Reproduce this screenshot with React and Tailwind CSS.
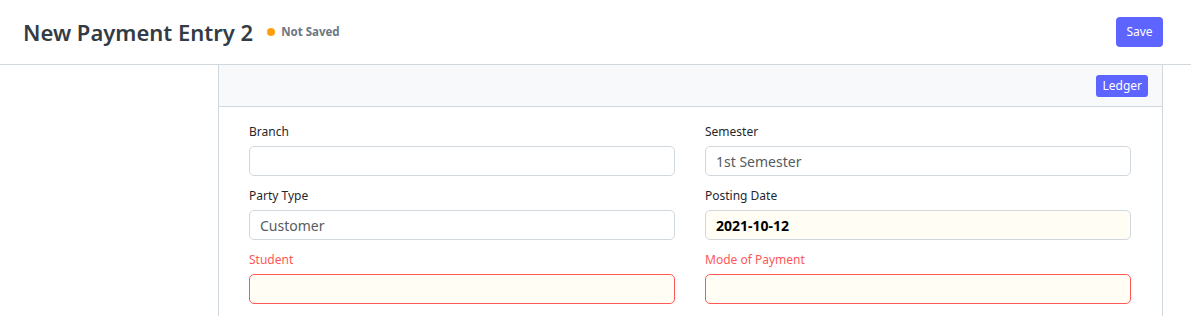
import React from "react";

const Field = ({ label, value, bold, required, highlight }) => (
  <div className="flex flex-col">
    <label
      className={`mb-[5px] h-[18px] text-[12px] leading-[18px] ${
        required ? "text-[#ff5858]" : "text-[#1f272e]"
      }`}
    >
      {label}
    </label>
    <div
      className={`flex h-[30px] items-center rounded-[5px] border px-[10px] text-[14px] ${
        required
          ? "border-[#ff5858] bg-[#fffdf4]"
          : highlight
          ? "border-[#d1d8dd] bg-[#fffdf4]"
          : "border-[#d1d8dd] bg-white"
      } ${bold ? "font-bold text-black" : "text-[#555b61]"}`}
    >
      {value}
    </div>
  </div>
);

export default function App() {
  return (
    <div
      className="h-[316px] overflow-hidden bg-white"
      style={{ fontFamily: '"Noto Sans", Roboto, sans-serif' }}
    >
      {/* Page head */}
      <div className="flex h-[65px] items-center justify-between border-b border-[#d1d8dd] pl-[23px] pr-[28px]">
        <div className="flex items-center">
          <h1 className="text-[22px] font-semibold leading-none text-[#333c44]">
            New Payment Entry 2
          </h1>
          <span className="ml-[14px] flex items-center gap-[6px] text-[11.5px] font-bold text-[#6c7680]">
            <span className="h-[8px] w-[8px] rounded-full bg-[#ffa00a]" />
            Not Saved
          </span>
        </div>
        <button className="h-[30px] w-[47px] rounded-[4px] bg-[#5e64ff] text-[12px] text-white">
          Save
        </button>
      </div>

      {/* Body */}
      <div className="flex">
        <div className="w-[218px] shrink-0" />
        <div className="w-[945px] border-x border-[#d1d8dd]">
          <div className="flex h-[42px] items-center justify-end border-b border-[#d1d8dd] bg-[#f8f9fb] pr-[14px]">
            <button className="h-[22px] rounded-[3px] bg-[#5e64ff] px-[6px] text-[12px] text-white">
              Ledger
            </button>
          </div>
          <div className="grid grid-cols-2 gap-x-[30px] gap-y-[11px] pl-[30px] pr-[31px] pt-[16px] pb-[12px]">
            <Field label="Branch" value="" />
            <Field label="Semester" value="1st Semester" />
            <Field label="Party Type" value="Customer" />
            <Field label="Posting Date" value="2021-10-12" bold highlight />
            <Field label="Student" value="" required />
            <Field label="Mode of Payment" value="" required />
          </div>
        </div>
      </div>
    </div>
  );
}
